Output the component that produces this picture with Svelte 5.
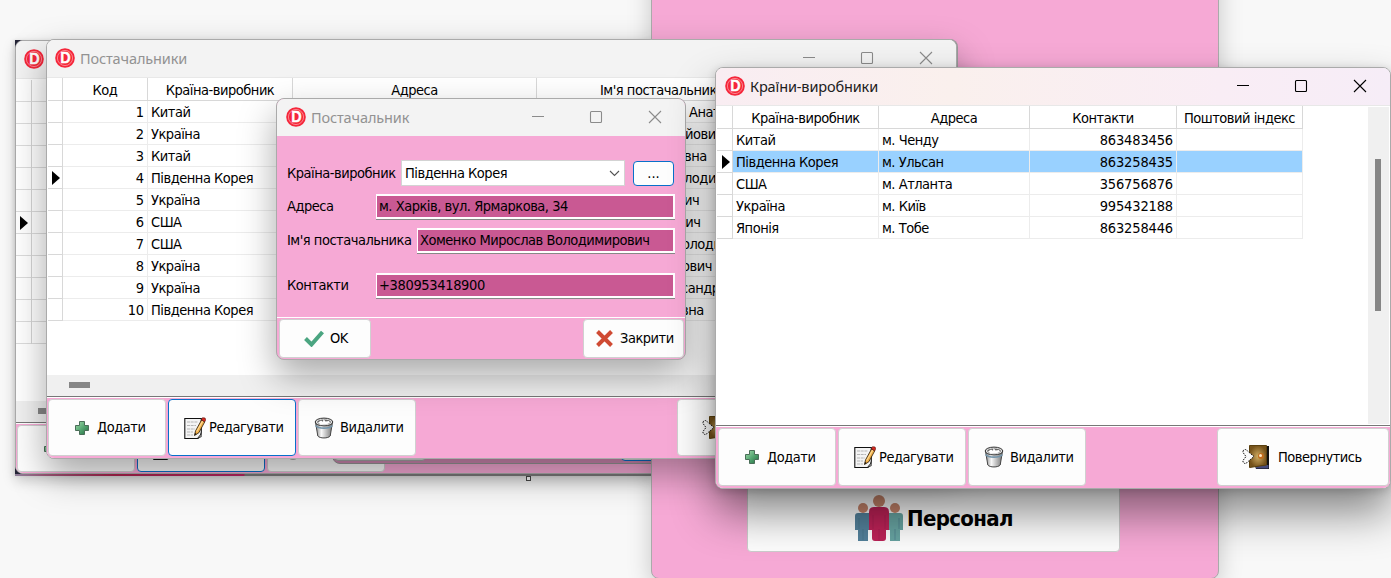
<script>
  const suppliers = [
    [1, 'Китай', 'Анатолі', 689],
    [2, 'Україна', 'йович', 685],
    [3, 'Китай', 'вна', 684],
    [4, 'Південна Корея', 'лодими', 684],
    [5, 'Україна', 'ич', 684],
    [6, 'США', 'вич', 678],
    [7, 'США', 'олоди', 682],
    [8, 'Україна', 'ович', 682],
    [9, 'Україна', 'сандрів', 681],
    [10, 'Південна Корея', 'вна', 681]
  ];
  const countries = [
    ['Китай', 'м. Ченду', '863483456'],
    ['Південна Корея', 'м. Ульсан', '863258435'],
    ['США', 'м. Атланта', '356756876'],
    ['Україна', 'м. Київ', '995432188'],
    ['Японія', 'м. Тобе', '863258446']
  ];
  const backRows = Array.from({ length: 12 }, (_, i) => i);
</script>

{#snippet logo()}
  <svg class="logo" width="20" height="20" viewBox="0 0 20 20">
    <circle cx="10" cy="10" r="9.8" fill="#f5263a" />
    <circle cx="10" cy="10" r="7.6" fill="none" stroke="#fb9aa2" stroke-width=".8" />
    <text x="10.4" y="15.2" text-anchor="middle" font-size="14.5" font-weight="600" font-family="Inter, Roboto" letter-spacing="0" fill="#fff" stroke="#fff" stroke-width=".5">D</text>
  </svg>
{/snippet}

{#snippet titlebar(name)}
  <header class="title">
    {@render logo()}
    <span class="name">{name}</span>
    <svg class="controls" width="130" height="14" viewBox="0 0 130 14" fill="none" stroke="currentColor" stroke-width="1.1">
      <path d="M0 6.5h12" />
      <rect x="58.5" y="1.5" width="11" height="11" rx="1" />
      <path d="M117 1l12 12M129 1l-12 12" />
    </svg>
  </header>
{/snippet}

{#snippet marker()}
  <svg width="8" height="14" viewBox="0 0 8 14"><path d="M0 0l8 7-8 7z" fill="#000" /></svg>
{/snippet}

{#snippet plus()}
  <svg width="16" height="16" viewBox="0 0 16 16">
    <defs><linearGradient id="g-plus" x2="1" y2="1"><stop stop-color="#a5dcae" /><stop offset=".5" stop-color="#57a873" /><stop offset="1" stop-color="#226b3f" /></linearGradient></defs>
    <path d="M5.5 1.5h5v4h4v5h-4v4h-5v-4h-4v-5h4z" fill="url(#g-plus)" stroke="#4a6e58" />
  </svg>
{/snippet}

{#snippet edit()}
  <svg width="22" height="22" viewBox="0 0 22 22">
    <path d="M.8 1.500h16.500v14l-1 3.500-2.500 2.500H.8z" fill="#f4f4f4" stroke="#111" stroke-width="1.100" />
    <path d="M3 5h11M3 8.500h9M3 12h8M3 15h6M3 18h6" stroke="#b5b5b5" stroke-dasharray="3 .7" />
    <path d="M13.500 21.500l3.800-5v3.300z" fill="#999" stroke="#111" stroke-width=".6" />
    <path d="M10.500 18.500l1-4.500L17.500 3l3.300 1.800-6 11z" fill="#efae45" stroke="#2b1b08" stroke-width=".8" />
    <path d="M12.700 14.500l6-10.500" stroke="#ffd995" stroke-width="1.200" />
    <path d="M17.500 3l1-2.300 2.600.3.500 2-.8 1.800z" fill="#d92920" stroke="#5a100a" stroke-width=".6" />
    <path d="M10.500 18.500l.5-2.500 1.500 1z" fill="#111" />
  </svg>
{/snippet}

{#snippet bin()}
  <svg width="20" height="22" viewBox="0 0 20 22">
    <defs><linearGradient id="g-bin"><stop stop-color="#8a8a8a" /><stop offset=".35" stop-color="#f8f8f8" /><stop offset="1" stop-color="#777" /></linearGradient></defs>
    <path d="M1.500 5l2.300 14c2 2.600 10.400 2.600 12.400 0l2.300-14z" fill="url(#g-bin)" stroke="#444" />
    <ellipse cx="10" cy="5" rx="8.800" ry="3.900" fill="#dedede" stroke="#333" />
    <ellipse cx="10" cy="5" rx="6.800" ry="2.600" fill="#666" />
    <path d="M4 5.500l3-2 2 1.200.500-2.700 2 2.500 3.500-.5 1 2-4 1.600-5 .2z" fill="#fff" />
    <path d="M1.500 8.500c3 3.500 14 3.500 17 0" fill="none" stroke="#7595aa" stroke-width="1.700" />
  </svg>
{/snippet}

{#snippet door()}
  <svg width="28" height="26" viewBox="0 0 28 26">
    <defs><radialGradient id="g-door"><stop stop-color="#d0ad63" /><stop offset="1" stop-color="#76531b" /></radialGradient></defs>
    <path d="M13 22L24 2h3v23H14z" fill="#111" />
    <path d="M14 22.500l10-1.500h2.500v3.500H14z" fill="#464b7c" />
    <path d="M7.500 1.500h17V21L7.500 23.500z" fill="url(#g-door)" stroke="#5a400f" />
    <path d="M1 7q2-3 4.500 0l6.500 5.500-6.500 5.500q-2.500 3-4.500 0v-1.500l3-4-3-4z" fill="#fafafa" stroke="#111" stroke-dasharray="1.500 1" />
    <circle cx="19" cy="12" r="3" fill="#bf6b1c" /><circle cx="18.500" cy="11.500" r="1.500" fill="#ffe8c5" />
  </svg>
{/snippet}

{#snippet toolbar(focused, label)}
  <footer class="toolbar">
    <div class="btn add">{@render plus()}<span>Додати</span></div>
    <div class="btn edit" class:focused>{@render edit()}<span>Редагувати</span></div>
    <div class="btn del">{@render bin()}<span>Видалити</span></div>
    <div class="btn back">{@render door()}{#if label}<span>{label}</span>{/if}</div>
  </footer>
{/snippet}

<main>
  <div class="sheet">
    <section class="window old">
      {@render titlebar('')}
      <div class="oldgrid">
        {#each backRows as i}
          <div class="oldrow"><i>{#if i === 6}{@render marker()}{/if}</i></div>
        {/each}
      </div>
      <div class="hscroll"><b></b></div>
      <footer class="toolbar">
        <div class="btn add">{@render plus()}</div>
        <div class="btn edit focused">{@render edit()}</div>
        <div class="btn del">{@render bin()}</div>
      </footer>
    </section>
    <div class="olddialog"><span class="ghost"></span><span class="ghost blue"></span></div>
    <div class="strip"></div>
  </div>

  <section class="home">
    <div class="staff">
      <svg width="48" height="47" viewBox="0 0 48 47">
        <circle cx="8" cy="13" r="5" fill="#c8866c" />
        <circle cx="40" cy="13" r="5" fill="#c8866c" />
        <path d="M0 21q0-3 3-3h11v17h-1v11H3V35H0z" fill="#53819b" />
        <path d="M34 18h11q3 0 3 3v14h-3v11H35V35h-1z" fill="#67a3a1" />
        <path d="M14 17q0-5 5-5h10q5 0 5 5v18h-3v8q0 3-3 3h-8q-3 0-3-3v-8h-3z" fill="#bd2257" />
        <ellipse cx="24" cy="6" rx="6" ry="6" fill="#c8866c" />
        <path d="M18 20v14M30 20v14M24 34v12" stroke="#a81f50" stroke-width=".8" />
        <path d="M4 23v11M8 34v11M44 23v11M40 34v11" stroke="#416d82" stroke-width=".5" />
      </svg>
      <span>Персонал</span>
    </div>
  </section>
  <div class="handle"></div>

  <section class="window suppliers">
    {@render titlebar('Постачальники')}
    <div class="grid sup">
      <div class="row head"><i></i><span>Код</span><span>Країна-виробник</span><span>Адреса</span><span class="person">Ім'я постачальника</span></div>
      {#each suppliers as [id, country, person, x]}
        <div class="row"><i>{#if id === 4}{@render marker()}{/if}</i><span class="num">{id}</span><span>{country}</span><span></span><span class="part" style="padding-left:{x - 537}px">{person}</span></div>
      {/each}
    </div>
    <div class="hscroll"><b></b></div>
    {@render toolbar(true, '')}
  </section>

  <section class="window dialog">
    {@render titlebar('Постачальник')}
    <div class="form">
      <div class="field f1"><label for="country">Країна-виробник</label>
        <div class="combo" id="country">Південна Корея<svg width="11" height="7" viewBox="0 0 11 7"><path d="M1 1l4.500 4.500L10 1" fill="none" stroke="#555" stroke-width="1.100" /></svg></div>
        <div class="more">...</div>
      </div>
      <div class="field f2"><span class="label">Адреса</span><div class="input">м. Харків, вул. Ярмаркова, 34</div></div>
      <div class="field f3"><span class="label">Ім'я постачальника</span><div class="input">Хоменко Мирослав Володимирович</div></div>
      <div class="field f4"><span class="label">Контакти</span><div class="input phone">+380953418900</div></div>
    </div>
    <footer class="actions">
      <div class="btn ok"><svg width="20" height="17" viewBox="0 0 20 17"><path d="M1.500 8.500l6 6L18.500 2" fill="none" stroke="#4ba581" stroke-width="4" /></svg><span>OK</span></div>
      <div class="btn close"><svg width="17" height="17" viewBox="0 0 17 17"><path d="M1.500 1.500l14 14M15.500 1.500l-14 14" stroke="#cf4a33" stroke-width="4" /></svg><span>Закрити</span></div>
    </footer>
  </section>

  <section class="window countries">
    {@render titlebar('Країни-виробники')}
    <div class="body">
      <div class="grid cou">
        <div class="row head"><i></i><span>Країна-виробник</span><span>Адреса</span><span>Контакти</span><span>Поштовий індекс</span></div>
        {#each countries as [name, city, phone], n}
          <div class="row" class:selected={n === 1}><i>{#if n === 1}{@render marker()}{/if}</i><span>{name}</span><span>{city}</span><span class="num">{phone}</span><span></span></div>
        {/each}
      </div>
      <div class="vscroll"><b></b></div>
    </div>
    {@render toolbar(false, 'Повернутись')}
  </section>
</main>

<style>
  :global(body) { overflow: hidden; }
  main { position: relative; width: 1391px; height: 578px; overflow: hidden; background: #f8f8f8; color: #000; font: 14.5px/21px "DejaVu Sans Condensed", "DejaVu Sans", sans-serif; font-stretch: condensed; letter-spacing: -.48px; white-space: nowrap; }
  main :global(*) { box-sizing: border-box; }
  svg { display: block; flex: none; }
  .window { position: absolute; display: flex; flex-direction: column; overflow: hidden; background: #fff; border: 1px solid #aaa; border-radius: 8px; }
  .title { display: flex; align-items: center; height: 38px; flex: none; padding: 0 23px 2px 8px; background: #f3f3f3; color: #929292; border-bottom: 1px solid #e8e8e8; }
  .name { margin-left: 5px; font: 14.5px/20px "Noto Sans", sans-serif; letter-spacing: -.13px; flex: 1; }
  .controls { color: #8b8b8b; }
  .grid { flex: 1; }
  .row { display: grid; height: 22px; }
  .row > * { border-right: 1px solid #ececec; border-bottom: 1px solid #ececec; padding: 0 3px; overflow: hidden; font-style: normal; line-height: 22px; }
  .row i { border-color: #d8d8d8; padding: 4px 0 0 5px; }
  .head { height: 23px; }
  .head > * { text-align: center; border-color: #d8d8d8; line-height: 24px; }
  .num { text-align: right; letter-spacing: -.15px; }
  .sup { padding-top: 0; }
  .sup .row { grid-template-columns: 15px 85px 145px 244px 300px; padding-left: 0; }
  .sup { padding-left: 1px; }
  .sup .row i { padding-left: 4px; }
  .sup .row .person { text-align: left; padding-left: 63px; }
  .sup .row:not(.head) > * { line-height: 23px; }
  .hscroll { height: 22px; flex: none; background: #f0f0f0; border-bottom: 1px solid #777; padding: 7px 0 0 22px; }
  .hscroll b { display: block; width: 21px; height: 6px; background: #868686; }
  .toolbar { flex: none; display: flex; gap: 2px; height: 61px; padding: 1px 1px 2px; background: #f6a9d5; border-top: 1px solid #fff; }
  .btn { display: flex; align-items: center; background: #fdfdfd; border: 1px solid #d0d0d0; border-radius: 4px; }
  .toolbar .btn { height: 57px; }
  .add { width: 118px; padding-left: 25px; gap: 7px; }
  .edit { width: 128px; padding-left: 15px; gap: 3px; }
  .del { width: 118px; padding-left: 15px; gap: 6px; }
  .back { width: 172px; margin-left: auto; padding-left: 24px; gap: 8px; }
  .btn.focused { border-color: #0870ca; }

  .suppliers { left: 46px; top: 39px; width: 911px; height: 420px; box-shadow: 1px 0 0 #989898, 0 16px 36px rgba(0,0,0,.34); }
  .suppliers .back { margin-right: 106px; }
  .dialog { left: 276px; top: 98px; width: 410px; height: 262px; background: #f6a9d5; box-shadow: 0 16px 36px rgba(0,0,0,.34); }
  .dialog .title { height: 37px; border: 0; padding-left: 9px; }
  .form { flex: 1; padding: 24px 10px 0 10px; }
  .field { display: flex; align-items: center; height: 26px; }
  .f1 label { width: 114px; }
  .combo { width: 224px; height: 26px; padding: 0 4px 0 3px; display: flex; align-items: center; justify-content: space-between; background: #fff; border: 1px solid #d3d3d3; }
  .more { margin-left: 8px; width: 41px; height: 25px; text-align: center; background: #fdfdfd; border: 1px solid #0870ca; border-radius: 4px; letter-spacing: 0; line-height: 23px; }
  .f2 { margin-top: 7px; } .f3 { margin-top: 8px; } .f4 { margin-top: 19px; }
  .label { width: 89px; }
  .f3 .label { width: 130px; }
  .input { flex: 1; height: 25px; padding-left: 2px; line-height: 20px; background: #c95993; border: 1px solid #fff; border-width: 2px 2px 2px 1px; box-shadow: 0 1px 0 #888; }
  .phone { letter-spacing: -.35px; }
  .actions { height: 42px; flex: none; border-top: 1px solid #fff; padding: 1px 1px 1px 2px; display: flex; justify-content: space-between; }
  .actions .btn { height: 39px; }
  .ok { width: 92px; padding-left: 24px; gap: 6px; }
  .close { width: 101px; padding-left: 12px; gap: 7px; }

  .countries { left: 715px; top: 67px; width: 676px; height: 422px; box-shadow: 0 24px 44px rgba(0,0,0,.46), 0 2px 10px rgba(0,0,0,.16); }
  .countries .title { background: linear-gradient(90deg, #f9edf2, #faf0ed 35%, #f9edf5 75%, #f6edf7); color: #202020; padding-left: 9px; }
  .countries .controls { color: #000; }
  .countries .toolbar { height: 62px; padding-left: 2px; }
  .countries .toolbar .btn { height: 58px; }
  .body { display: flex; flex: 1; min-height: 0; border-bottom: 1px solid #777; }
  .cou { padding-left: 1px; }
  .cou .row { grid-template-columns: 16px 146px 151px 147px 126px; }
  .cou .row.selected > span { background: #99d1ff; }
  .vscroll { width: 21px; margin: 1px 1px 1px 0; background: #f0f0f0; padding: 52px 0 0 7px; }
  .vscroll b { display: block; width: 6px; height: 152px; background: #868686; }

  .sheet { position: absolute; left: 15px; top: 40px; width: 640px; height: 436px; background: #262638; box-shadow: 0 5px 12px rgba(0,0,0,.18), -2px 0 3px rgba(0,0,0,.08); overflow: hidden; }
  .old { left: 0; top: 0; width: 943px; height: 434px; }
  .oldgrid { flex: 1; padding-top: 1px; }
  .oldrow { height: 22px; border-bottom: 1px solid #dcdcdc; }
  .oldrow i { display: block; width: 16px; height: 22px; padding: 4px 0 0 4px; border-right: 1px solid #d4d4d4; }
  .old .toolbar { height: 50px; }
  .old .toolbar .btn { height: 47px; }
  .olddialog { position: absolute; left: 317px; bottom: 12px; width: 330px; height: 25px; background: #d18ab3; border: 1px solid #999; border-radius: 0 0 8px 8px; }
  .ghost { position: absolute; left: 1px; bottom: 2px; width: 92px; height: 21px; background: #ddd; border: 1px solid #aaa; border-radius: 4px; }
  .blue { left: 288px; border-color: #0870ca; }
  .strip { position: absolute; left: 0; right: 0; bottom: 0; height: 2px; background: linear-gradient(90deg, #8e7f9a 0, #9b5777 30px, #a9224c 100px, #b62562 229px, #777 230px); }
  .handle { position: absolute; left: 526px; top: 476px; width: 5px; height: 5px; border: 1px solid #444; background: #eee; }
  .home { position: absolute; left: 651px; top: -40px; width: 568px; height: 619px; background: #f6a9d5; border: 1px solid #aaa; border-radius: 8px; box-shadow: 0 8px 24px rgba(0,0,0,.2); padding: 489px 98px 27px 95px; }
  .staff { height: 102px; padding: 35px 0 0 107px; display: flex; align-items: center; gap: 4px; background: #fdfdfd; border: 1px solid #ccc; border-radius: 4px; font-size: 22px; font-weight: 700; letter-spacing: -.65px; }
</style>
